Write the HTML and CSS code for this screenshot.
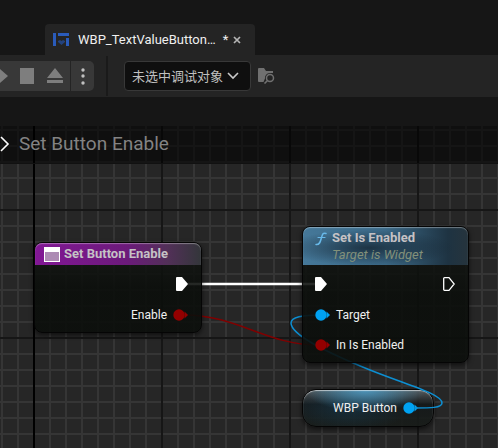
FILE: index.html
```html
<!DOCTYPE html>
<html lang="zh-CN">
<head>
<meta charset="utf-8">
<title>WBP_TextValueButton</title>
<link rel="stylesheet" href="styles.css">
</head>
<body>
<header class="tabs">
  <div class="tab">
    <svg class="tab-icon" width="16" height="14" viewBox="0 0 16 14" aria-hidden="true">
      <path fill="#2a5bba" d="M0 0h3v13H0zM5 0h11v3H5zM13 5h3v8h-3z"/>
      <path fill="#23427d" d="M5 8l2-1 1.500 1L10 7l2 1v1l-3.500 3L5 9z"/>
    </svg>
    <span class="tab-name">WBP_TextValueButton…</span>
    <span class="tab-dirty">*</span>
    <button class="tab-close" aria-label="Close">
      <svg width="8" height="8" viewBox="0 0 8 8"><path d="M1 1l6 6M7 1L1 7" stroke="#b4b4b4" stroke-width="1.700"/></svg>
    </button>
  </div>
</header>
<div class="toolbar">
  <div class="transport">
    <button class="tool play" aria-label="Play"><svg width="8" height="14" viewBox="0 0 8 14"><path fill="#7e7e7e" d="M0 0l8 7-8 7z"/></svg></button>
    <button class="tool" aria-label="Stop"><svg width="14" height="16" viewBox="0 0 14 16"><path fill="#7e7e7e" d="M0 0h14v16H0z"/></svg></button>
    <button class="tool" aria-label="Eject"><svg width="16" height="16" viewBox="0 0 16 16"><path fill="#7e7e7e" d="M8 0l8 10H0zM0 12h16v3H0z"/></svg></button>
    <button class="tool more" aria-label="Options"><svg width="4" height="18" viewBox="0 0 4 18" fill="#c0c0c0"><circle cx="2" cy="3" r="1.700"/><circle cx="2" cy="9" r="1.700"/><circle cx="2" cy="16" r="1.700"/></svg></button>
  </div>
  <div class="divider"></div>
  <div class="picker">
    <select class="picker-select" aria-label="调试对象"><option>未选中调试对象</option></select>
    <svg class="picker-arrow" width="12" height="8" viewBox="0 0 12 8" aria-hidden="true"><path d="M1 1l5 5 5-5" fill="none" stroke="#c8c8c8" stroke-width="1.600"/></svg>
  </div>
  <button class="browse" aria-label="Browse">
    <svg width="17" height="16" viewBox="0 0 17 16">
      <path fill="#707070" d="M1 0h5l2 3h7v2H11.500a5 5 0 0 0-4.500 5.500L5.500 14H1a1 1 0 0 1-1-1V1a1 1 0 0 1 1-1z"/>
      <circle cx="12" cy="10" r="3.500" fill="none" stroke="#707070" stroke-width="1.500"/>
      <path d="M9.500 12.500L6.500 15.500" stroke="#707070" stroke-width="1.600"/>
    </svg>
  </button>
</div>
<main class="graph">
  <nav class="crumbs">
    <svg width="10" height="16" viewBox="0 0 10 16" aria-hidden="true"><path d="M1 1l7 7-7 7" fill="none" stroke="#fff" stroke-width="1.600"/></svg>
    <h1 class="crumb">Set Button Enable</h1>
  </nav>
  <svg class="wires" width="498" height="322" viewBox="0 0 498 322" fill="none" aria-hidden="true">
    <path d="M187 158H318" stroke="#fff" stroke-width="2.500"/>
    <path d="M184 189C238 189 266 219 318 219" stroke="#800000" stroke-width="1.500"/>
    <path d="M322 189C302 189 291 191 291 197C291 209 326 226 370 244C410 260 442 268 442 277C442 282 430 282 415 282" stroke="#0d8fd2" stroke-width="1.500"/>
  </svg>

  <section class="node entry">
    <header class="node-head">
      <svg width="16" height="15" viewBox="0 0 16 15" aria-hidden="true"><path fill="#fff" d="M0 0h16v15H0z"/><path fill="#ad8bb4" d="M1 5h14v9H1z"/></svg>
      <h2 class="node-title">Set Button Enable</h2>
    </header>
    <div class="pin out exec"><svg width="12" height="14" viewBox="0 0 12 14"><path fill="#fff" d="M1 0h5l6 7-6 7H1a1 1 0 0 1-1-1V1a1 1 0 0 1 1-1z"/></svg></div>
    <div class="pin out"><span>Enable</span><svg class="dot" width="15" height="12" viewBox="0 0 15 12" fill="#930000"><circle cx="6" cy="6" r="5.700"/><path d="M11.500 2.500L15 6l-3.500 3.500z"/></svg></div>
  </section>

  <section class="node call">
    <header class="node-head">
      <svg width="12" height="14" viewBox="0 0 12 14" fill="none" stroke="#68b9e9" stroke-linecap="round" aria-hidden="true"><path d="M11 1.500C8 .5 7.500 2 6.500 5.500S5 13 1 12.500" stroke-width="1.500"/><path d="M3 5.500h7" stroke-width="1.200"/></svg>
      <div>
        <h2 class="node-title">Set Is Enabled</h2>
        <p class="node-sub">Target is Widget</p>
      </div>
    </header>
    <div class="pin exec pair">
      <svg width="12" height="14" viewBox="0 0 12 14"><path fill="#fff" d="M1 0h5l6 7-6 7H1a1 1 0 0 1-1-1V1a1 1 0 0 1 1-1z"/></svg>
      <svg width="12" height="14" viewBox="0 0 12 14"><path fill="none" stroke="#fff" stroke-width="1.300" d="M1.500 .7H6L11.200 7 6 13.300H1.500a.8.8 0 0 1-.8-.8V1.500a.8.8 0 0 1 .8-.8z"/></svg>
    </div>
    <div class="pin"><svg class="dot" width="15" height="12" viewBox="0 0 15 12" fill="#00a2f2"><circle cx="6" cy="6" r="5.700"/><path d="M11.500 2.500L15 6l-3.500 3.500z"/></svg><span>Target</span></div>
    <div class="pin"><svg class="dot" width="15" height="12" viewBox="0 0 15 12" fill="#930000"><circle cx="6" cy="6" r="5.700"/><path d="M11.500 2.500L15 6l-3.500 3.500z"/></svg><span>In Is Enabled</span></div>
  </section>

  <section class="node variable">
    <span>WBP Button</span>
    <svg class="dot" width="15" height="12" viewBox="0 0 15 12" fill="#00a2f2"><circle cx="6" cy="6" r="5.700"/><path d="M11.500 2.500L15 6l-3.500 3.500z"/></svg>
  </section>
</main>
</body>
</html>
```
FILE: styles.css
```css
* { box-sizing: border-box; }

body {
  margin: 0;
  min-height: 100vh;
  display: flex;
  flex-direction: column;
  background: #161616;
  color: #f0f0f0;
  font: 12px/16px Roboto, "Noto Sans CJK SC", sans-serif;
}

h1, h2, p { margin: 0; }

button {
  padding: 0;
  border: 0;
  background: none;
}

svg { display: block; flex: none; }

.tabs { padding: 24px 0 0 45px; }

.tab {
  display: flex;
  align-items: center;
  width: 210px;
  height: 31px;
  padding-left: 8px;
  border-radius: 4px 4px 0 0;
  background: #242424;
  font-size: 13px;
}

.tab-name { margin-left: 9px; }
.tab-dirty { margin-left: 7px; }
.tab-close { margin-left: 5px; }

.toolbar {
  display: flex;
  align-items: center;
  height: 42px;
  background: #242424;
}

.transport {
  display: flex;
  height: 30px;
  border-radius: 0 5px 5px 0;
  background: #383838;
  overflow: hidden;
}

.tool {
  display: flex;
  align-items: center;
  justify-content: center;
  width: 28px;
}

.play {
  width: 13px;
  justify-content: flex-start;
}

.tool.more {
  width: 24px;
  margin-left: 1px;
  border-left: 1px solid #242424;
}

.divider {
  width: 2px;
  height: 40px;
  margin: 0 16px 0 12px;
  background: #1a1a1a;
}

.picker { position: relative; }

.picker-select {
  appearance: none;
  width: 127px;
  height: 30px;
  padding: 0 7px;
  border: 1px solid #383838;
  border-radius: 4px;
  background: #0f0f0f;
  color: #c0c0c0;
  font: 13px/20px "Noto Sans CJK SC", sans-serif;
}

.picker-arrow {
  position: absolute;
  top: 11px;
  right: 12px;
  pointer-events: none;
}

.browse { margin-left: 7px; }

.graph {
  position: relative;
  flex: 1;
  margin-top: 29px;
  overflow: hidden;
  background:
    linear-gradient(#000, #000) 33px 0 / 2px 100% no-repeat,
    repeating-linear-gradient(90deg, #161616 0 2px, transparent 2px 128px) 33px 0 / 128px 100%,
    repeating-linear-gradient(#161616 0 2px, transparent 2px 128px) 0 83px / 100% 128px,
    repeating-linear-gradient(90deg, #353535 0 2px, transparent 2px 16px) 1px 0 / 16px 100%,
    repeating-linear-gradient(#353535 0 2px, transparent 2px 16px) 0 3px / 100% 16px,
    #262626;
}

.crumbs {
  display: flex;
  align-items: center;
  gap: 9px;
  height: 38px;
  padding-bottom: 1px;
  border-bottom: 1px solid #111;
  background: rgba(0, 0, 0, 0.6);
}

.crumb {
  color: #838383;
  font-size: 19px;
  font-weight: 400;
  line-height: 24px;
}

.wires {
  position: absolute;
  z-index: 1;
  top: 0;
  left: 0;
}

.node {
  position: absolute;
  z-index: 2;
  border: 1px solid #050505;
  border-radius: 8px;
  background: linear-gradient(rgba(20, 23, 20, 0.82), rgba(11, 14, 11, 0.9) 50%);
  box-shadow: 0 2px 5px rgba(0, 0, 0, 0.6);
}

.entry {
  top: 116px;
  left: 34px;
  width: 168px;
  height: 91px;
}

.call {
  top: 100px;
  left: 302px;
  width: 167px;
  height: 137px;
}

.node-head {
  display: flex;
  border-radius: 7px 7px 0 0;
  box-shadow: inset 0 1px 1px rgba(255, 255, 255, 0.35);
}

.entry .node-head {
  align-items: center;
  gap: 4px;
  height: 22px;
  padding-left: 9px;
  background: linear-gradient(90deg, #821795, #6c1a7b 55%, #523058 80%, #33363a);
}

.call .node-head {
  gap: 5px;
  height: 38px;
  padding: 3px 0 0 12px;
  background:
    radial-gradient(ellipse 85px 18px at 40% 55%, rgba(18, 32, 44, 0.75), transparent),
    linear-gradient(90deg, #457899, #3b6987 50%, #1e3342 88%, #26343d);
}

.node-title {
  color: #c5c2c5;
  font-size: 13px;
  font-weight: 700;
  line-height: 16px;
}

.call .node-head svg { margin-top: 2px; }

.node-sub {
  color: #82907a;
  font-size: 13px;
  font-style: italic;
  line-height: 18px;
}

.pin {
  display: flex;
  align-items: center;
  gap: 6px;
  height: 30px;
  padding: 0 13px 0 12px;
}

.out { justify-content: flex-end; }
.exec { height: 32px; margin-top: 3px; }
.pair { justify-content: space-between; }

.variable {
  z-index: 0;
  top: 263px;
  left: 302px;
  display: flex;
  align-items: center;
  justify-content: flex-end;
  gap: 6px;
  width: 132px;
  height: 38px;
  padding-right: 15px;
  border-radius: 14px;
  background:
    radial-gradient(ellipse 60px 22px at 48% 0, rgba(76, 159, 202, 0.85), transparent),
    radial-gradient(ellipse 60px 24px at 35% 50%, rgba(22, 65, 90, 0.5), transparent),
    linear-gradient(rgba(90, 95, 98, 0.9), rgba(20, 24, 25, 0.9) 40%, rgba(24, 28, 25, 0.9));
  box-shadow: inset 0 1px 1px rgba(255, 255, 255, 0.6), 0 2px 5px rgba(0, 0, 0, 0.6);
}
```
